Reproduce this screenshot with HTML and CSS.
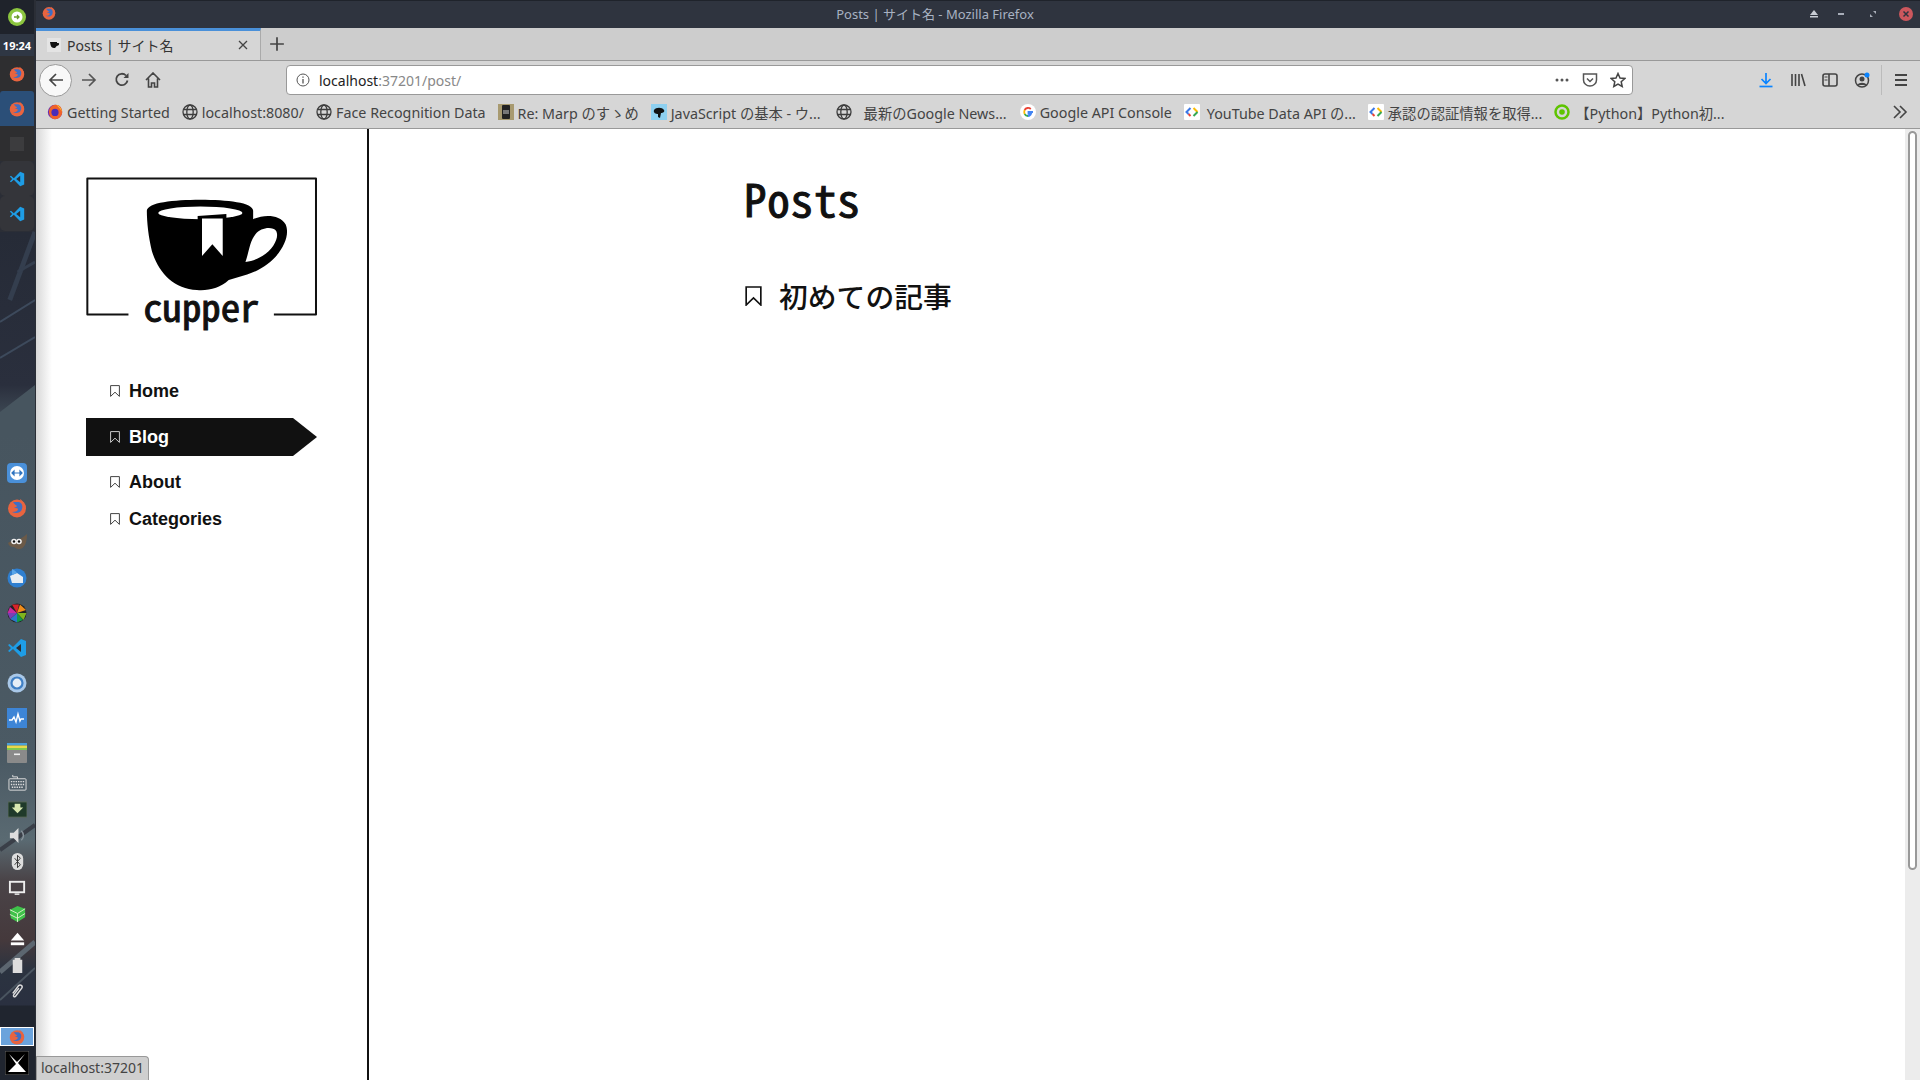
FILE: index.html
```html
<!DOCTYPE html>
<html lang="ja">
<head>
<meta charset="utf-8">
<title>Posts | サイト名 - Mozilla Firefox</title>
<link rel="stylesheet" href="styles.css">
</head>
<body>
<svg class="defs" width="0" height="0">
  <symbol id="ff" viewBox="0 0 20 20">
    <circle cx="10" cy="10.5" r="9" fill="#e8643f"/>
    <path d="M13 1c3 2 6 5 6 9l-4-2z" fill="#e8643f"/>
    <path d="M6 4h6c3 1 4 4 3 7-1 4-6 5-10 3 4 0 6-1 6-3 0-1-2-1-4-1 1-1 3-1 3-2-1-1-3-2-4-4z" fill="#3f6fc4"/>
  </symbol>
  <symbol id="ffc" viewBox="0 0 20 20">
    <circle cx="10" cy="10" r="9" fill="#6a2bb0"/>
    <path d="M3 13C1 7 5 1 11 1c5 0 8 4 8 9 0 5-4 9-9 9-3 0-6-2-7-6z" fill="#f0622a"/>
    <path d="M12 1c4 2 6 5 7 9-1-2-3-4-7-9z" fill="#ffcb2e"/>
    <circle cx="10" cy="10.5" r="4.5" fill="#4a2bb8"/>
  </symbol>
  <symbol id="globe" viewBox="0 0 16 16">
    <g fill="none" stroke="#3d3d3d" stroke-width="1.3">
      <circle cx="8" cy="8" r="7"/><ellipse cx="8" cy="8" rx="3.2" ry="7"/>
      <path d="M1.5 5.5h13M1.5 10.5h13"/>
    </g>
  </symbol>
  <symbol id="gc" viewBox="0 0 16 16">
    <rect width="16" height="16" rx="1" fill="#fff"/>
    <path d="M6.5 4 2.5 8l2 2" fill="none" stroke="#3b78e7" stroke-width="2"/>
    <path d="M4.500 10 6.500 12" fill="none" stroke="#ea4335" stroke-width="2"/>
    <path d="M9.500 4 13.500 8" fill="none" stroke="#fbbc05" stroke-width="2"/>
    <path d="M13.500 8 9.500 12" fill="none" stroke="#34a853" stroke-width="2"/>
  </symbol>
  <symbol id="vsc" viewBox="0 0 20 20">
    <path d="M14 1 6 9 2.500 6 1 7l3 3-3 3 1.500 1L6 11l8 8 5-2V3z" fill="#1e9de6"/>
    <path d="M14 6v8l-5-4z" fill="#2b2e34"/>
  </symbol>
  <symbol id="mark" viewBox="0 0 10 12">
    <path d="M.6.6h8.800v10.800L5 7.200.6 11.400z" fill="none" stroke="currentColor" stroke-width="1"/>
  </symbol>
</svg>

<div class="desktop">
  <aside class="dock">
    <svg class="dock-art" viewBox="0 0 36 1080" preserveAspectRatio="none">
      <path d="M36 232 10 300" stroke="#343e4e" stroke-width="5" fill="none"/>
      <path d="M18 272 36 262" stroke="#343e4e" stroke-width="3" fill="none"/>
      <path d="M0 322 36 300" stroke="#3d4a5c" stroke-width="2" fill="none"/>
      <path d="M0 358 36 337" stroke="#3d4a5c" stroke-width="2" fill="none"/>
      <path d="M0 412 36 385V435H0Z" fill="#47555f"/>
      <path d="M0 850 36 825" stroke="#3a3f48" stroke-width="4" fill="none"/>
      <path d="M0 972 36 942" stroke="#5c6670" stroke-width="5" fill="none"/>
      <path d="M0 1000 36 968" stroke="#4a5560" stroke-width="2" fill="none"/>
    </svg>
    <div class="dock-logo"><svg class="ic20" viewBox="0 0 20 20"><circle cx="10" cy="10" r="9" fill="#8cc63f"/><circle cx="10" cy="10" r="5.500" fill="#fff"/><path d="M7 10h5M10 8l2 2-2 2" stroke="#6a9c2a" stroke-width="1.300" fill="none"/></svg></div>
    <div class="dock-clock">19:24</div>
    <div class="task"><svg class="ic16"><use href="#ff"/></svg></div>
    <div class="task task-on"><svg class="ic16"><use href="#ff"/></svg></div>
    <div class="task"><span class="task-square"></span></div>
    <div class="task task-round"><svg class="ic16"><use href="#vsc"/></svg></div>
    <div class="task task-round"><svg class="ic16"><use href="#vsc"/></svg></div>

    <div class="launchers">
      <div class="launch"><svg class="ic20" viewBox="0 0 20 20"><rect width="20" height="20" rx="4" fill="#4a90d9"/><circle cx="10" cy="10" r="7" fill="#fff"/><path d="M5 10h10M5 10l2-2v4zM15 10l-2-2v4z" stroke="#2f74c0" stroke-width="1.200" fill="#2f74c0"/></svg></div>
      <div class="launch"><svg class="ic20"><use href="#ff"/></svg></div>
      <div class="launch"><svg class="ic20" viewBox="0 0 20 20"><path d="M1 10c3-3 12-2 19-9 0 8-2 15-8 15-3 0-4-2-6-2-2 0-4-1-5-4z" fill="#6b5a48"/><circle cx="7" cy="8.500" r="2.800" fill="#eee"/><circle cx="12" cy="8.500" r="2.800" fill="#eee"/><circle cx="7" cy="8.500" r="1.200" fill="#111"/><circle cx="12" cy="8.500" r="1.200" fill="#111"/></svg></div>
      <div class="launch"><svg class="ic20" viewBox="0 0 20 20"><circle cx="10" cy="10" r="9.500" fill="#2f7fd0"/><path d="M3 8 10 5l6 4v6H5z" fill="#e8edf2"/><path d="M5 1c2 1 4 2 5 4L5 7z" fill="#5aa5e8"/></svg></div>
      <div class="launch"><svg class="ic20" viewBox="0 0 20 20"><circle cx="10" cy="10" r="9.500" fill="#222"/><path d="M10 10 5 1.500h7z" fill="#d8232a"/><path d="M10 10 13 1.500 19 7z" fill="#f08c1a"/><path d="M10 10h9.500l-3 7z" fill="#7fb51e"/><path d="M10 10l6 7-6 2.500z" fill="#12994a"/><path d="M10 10v9.500L3 16z" fill="#2a78c8"/><path d="M10 10 3 16 .5 10z" fill="#7a3fb5"/><path d="M10 10H.5L3 4z" fill="#c82aa0"/></svg></div>
      <div class="launch"><svg class="ic20"><use href="#vsc"/></svg></div>
      <div class="launch"><svg class="ic20" viewBox="0 0 20 20"><circle cx="10" cy="10" r="9.500" fill="#a9c8e8"/><circle cx="10" cy="10" r="5.500" fill="#e6eef6" stroke="#3f7fc4" stroke-width="2.200"/></svg></div>
      <div class="launch"><svg class="ic20" viewBox="0 0 20 20"><rect width="20" height="20" fill="#3d85d6"/><path d="M2 12h3l2-3 2 5 2-8 2 7 1-2h3" fill="none" stroke="#fff" stroke-width="1.400"/></svg></div>
      <div class="launch"><svg class="ic20" viewBox="0 0 20 20"><rect y="0" width="20" height="2.500" fill="#4a9fd8"/><rect y="2.500" width="20" height="2.500" fill="#e8d84a"/><rect y="5" width="20" height="2.500" fill="#7ec850"/><rect y="7" width="20" height="13" rx="1" fill="#8a8a8a"/><rect x="7" y="10.500" width="6" height="1.600" fill="#eee"/></svg></div>
    </div>

    <div class="tray">
      <div class="tray-item"><svg class="ic20" viewBox="0 0 20 20"><rect x="1" y="5" width="18" height="12" rx="1" fill="none" stroke="#ddd"/><path d="M3 8h14M3 11h14M4 14h12" stroke="#ddd" stroke-width="1.500" stroke-dasharray="1.500 1"/><path d="M10 5V3H5V1" stroke="#ddd" fill="none"/></svg></div>
      <div class="tray-item"><svg class="ic20" viewBox="0 0 20 20"><rect width="20" height="16" y="2" fill="#1f3a2a" stroke="#5a6a5a"/><path d="M7 4h6v4h3l-6 6-6-6h3z" fill="#d8e8b0"/></svg></div>
      <div class="tray-item"><svg class="ic20" viewBox="0 0 20 20"><path d="M2 7h4l5-5v16l-5-5H2z" fill="#ddd"/><path d="M14 5c3 3 3 7 0 10" stroke="#8a949c" stroke-width="1.500" fill="none"/></svg></div>
      <div class="tray-item"><svg class="ic20" viewBox="0 0 20 20"><rect x="4" y="1" width="12" height="18" rx="6" fill="#ddd"/><path d="M7 6.500l6 7-3 3v-13l3 3-6 7" fill="none" stroke="#333"/></svg></div>
      <div class="tray-item"><svg class="ic20" viewBox="0 0 20 20"><rect x="2" y="4" width="15" height="11" fill="none" stroke="#eee" stroke-width="2"/><path d="M7 17h5" stroke="#eee" stroke-width="1.500"/></svg></div>
      <div class="tray-item"><svg class="ic20" viewBox="0 0 20 20"><path d="M2 6l8-4 8 3v9l-8 5-7-4z" fill="#3fc24a"/><path d="M2 6l8 4 8-5M10 10v9M2 11l8 4 8-5" stroke="#d8f0c8" fill="none"/></svg></div>
      <div class="tray-item"><svg class="ic20" viewBox="0 0 20 20"><path d="M10 3l7 8H3z" fill="#fff"/><rect x="3" y="13" width="14" height="3" fill="#fff"/></svg></div>
      <div class="tray-item"><svg class="ic20" viewBox="0 0 20 20"><path d="M7 2h6v2h2v14H5V4h2z" fill="#ddd"/></svg></div>
      <div class="tray-item"><svg class="ic20" viewBox="0 0 20 20"><path d="M5 12l6-8c2-2 5 0 3.500 2.500L8 15c-1 1.500-3 0-2-1.500l5.500-7" fill="none" stroke="#ddd" stroke-width="1.500"/></svg></div>
    </div>

    <div class="dock-bottom">
      <div class="win-active"><svg class="ic16"><use href="#ff"/></svg></div>
      <div class="x-box"><svg class="ic24" viewBox="0 0 24 24"><rect width="24" height="24" fill="#000" stroke="#666"/><path d="M4 3l8 8 8-8-7 9 8 9H3l8-8z" fill="#fff"/></svg></div>
    </div>
  </aside>

  <div class="window">
    <header class="titlebar">
      <svg class="ic14 title-ff"><use href="#ff"/></svg>
      <div class="title-text">Posts | サイト名 - Mozilla Firefox</div>
      <div class="win-btns">
        <svg class="ic12 win-first" viewBox="0 0 12 12"><path d="M6 2l4 5H2z" fill="#c8ccd4"/><rect x="2" y="8" width="8" height="1.500" fill="#c8ccd4"/></svg>
        <svg class="ic12" viewBox="0 0 12 12"><rect x="3" y="5" width="6" height="2" fill="#a8adb8"/></svg>
        <svg class="ic12" viewBox="0 0 12 12"><path d="M6 3h3v3zM6 9H3V6z" fill="#a8adb8"/></svg>
        <svg class="ic14" viewBox="0 0 14 14"><circle cx="7" cy="7" r="7" fill="#cc575d"/><path d="M4.500 4.500l5 5m0-5l-5 5" stroke="#2f343f" stroke-width="1.500"/></svg>
      </div>
    </header>

    <div class="tabbar">
      <div class="tab">
        <svg class="ic14" viewBox="0 0 14 14"><rect width="14" height="14" fill="#e4e4e4"/><path d="M3 4h7v1h1.500c1 0 1 3-2 3-.5 1.500-1.500 2-2.500 2-3 0-3.500-3-4-6z" fill="#111"/></svg>
        <span class="tab-label">Posts | サイト名</span>
        <svg class="ic12 tab-close" viewBox="0 0 12 12"><path d="M2 2l8 8m0-8l-8 8" stroke="#444" stroke-width="1.300"/></svg>
      </div>
      <svg class="newtab" viewBox="0 0 14 14"><path d="M7 1v12M1 7h12" stroke="#444" stroke-width="1.500"/></svg>
    </div>

    <div class="navbar">
      <div class="back"><svg class="ic18" viewBox="0 0 18 18"><path d="M16 9H3M9 3 3 9l6 6" fill="none" stroke="#444" stroke-width="1.700"/></svg></div>
      <svg class="ic18 fwd" viewBox="0 0 18 18"><path d="M2 9h13M9 3l6 6-6 6" fill="none" stroke="#555" stroke-width="1.700"/></svg>
      <svg class="ic16 reload" viewBox="0 0 16 16"><path d="M13.500 8.500A5.700 5.700 0 1 1 12 3.500" fill="none" stroke="#444" stroke-width="1.800"/><path d="M14.500 1v5h-5z" fill="#444"/></svg>
      <svg class="ic16 home" viewBox="0 0 16 16"><path d="M1 8l7-7 7 7M3.500 6.500V15h3v-4h3v4h3V6.500" fill="none" stroke="#444" stroke-width="1.600"/></svg>
      <div class="urlbar">
        <svg class="ic14" viewBox="0 0 14 14"><circle cx="7" cy="7" r="6" fill="none" stroke="#555"/><path d="M7 6v4.500M7 3.500v1.300" stroke="#555" stroke-width="1.300"/></svg>
        <span class="url"><span class="url-host">localhost</span>:37201/post/</span>
        <span class="url-fill"></span>
        <svg class="ic16" viewBox="0 0 16 16"><circle cx="3" cy="8" r="1.500" fill="#555"/><circle cx="8" cy="8" r="1.500" fill="#555"/><circle cx="13" cy="8" r="1.500" fill="#555"/></svg>
        <svg class="ic16" viewBox="0 0 16 16"><path d="M1.500 2h13v6c0 3.500-3 6-6.500 6s-6.500-2.500-6.500-6z" fill="none" stroke="#555" stroke-width="1.500"/><path d="M5 6.500l3 3 3-3" fill="none" stroke="#555" stroke-width="1.500"/></svg>
        <svg class="ic16" viewBox="0 0 16 16"><path d="M8 1.500l2 4.500 4.800.5-3.600 3.200 1 4.800L8 12l-4.200 2.500 1-4.800L1.200 6.500 6 6z" fill="none" stroke="#444" stroke-width="1.500"/></svg>
      </div>
      <div class="tools">
        <svg class="ic16" viewBox="0 0 16 16"><path d="M8 1v10M3.500 7 8 11.500 12.500 7" fill="none" stroke="#0a84ff" stroke-width="1.700"/><path d="M1.500 14.500h13" stroke="#0a84ff" stroke-width="1.700"/></svg>
        <svg class="ic16" viewBox="0 0 16 16"><path d="M2 2v12M5.500 2v12M9 2v12M11.500 2l3.500 12" stroke="#444" stroke-width="1.600"/></svg>
        <svg class="ic16" viewBox="0 0 16 16"><rect x="1" y="2" width="14" height="12" rx="2" fill="none" stroke="#444" stroke-width="1.600"/><path d="M7 2v12" stroke="#444" stroke-width="1.600"/><path d="M2.500 5h3M2.500 8h3" stroke="#444"/></svg>
        <svg class="ic16" viewBox="0 0 16 16"><circle cx="8" cy="8.500" r="6.500" fill="none" stroke="#444" stroke-width="1.500"/><circle cx="8" cy="7" r="2.500" fill="#444"/><path d="M3.500 13c1-3 8-3 9 0" fill="#444"/><circle cx="13" cy="3" r="2.500" fill="#0a84ff"/></svg>
        <span class="tools-sep"></span>
        <svg class="ic16" viewBox="0 0 16 16"><path d="M2 3h12M2 8h12M2 13h12" stroke="#444" stroke-width="1.800"/></svg>
      </div>
    </div>

    <nav class="bookmarks">
      <a class="bm"><svg class="ic16"><use href="#ffc"/></svg>Getting Started</a>
      <a class="bm"><svg class="ic16"><use href="#globe"/></svg>localhost:8080/</a>
      <a class="bm"><svg class="ic16"><use href="#globe"/></svg>Face Recognition Data</a>
      <a class="bm"><svg class="ic16" viewBox="0 0 16 16"><rect width="16" height="16" fill="#a89a70"/><rect x="4" y="1" width="8" height="14" rx="1" fill="#222"/><rect x="5" y="6" width="6" height="4" fill="#777"/></svg>Re: Marp のすゝめ</a>
      <a class="bm bm-js"><svg class="ic16" viewBox="0 0 16 16"><rect width="16" height="16" fill="#8ed0f0"/><path d="M3 6c2-3 8-3 10 0 1 2-1 3-3 3l-1 5-2-1v-3C5 10 2 9 3 6z" fill="#111"/></svg>JavaScript の基本 - ウ...</a>
      <a class="bm bm-news"><svg class="ic16"><use href="#globe"/></svg>最新のGoogle News...</a>
      <a class="bm"><svg class="ic16" viewBox="0 0 16 16"><circle cx="8" cy="8" r="8" fill="#fff"/><path d="M13 8H8.500v1.800H11c-.5 1.500-1.500 2.200-3 2.200" fill="none" stroke="#4285f4" stroke-width="1.800"/><path d="M8 12c-1.500 0-2.700-.8-3.400-2" fill="none" stroke="#34a853" stroke-width="1.800"/><path d="M4.600 10C4.200 9 4.200 7 4.600 6" fill="none" stroke="#fbbc05" stroke-width="1.800"/><path d="M4.600 6C5.800 3.600 9 3.400 10.800 5" fill="none" stroke="#ea4335" stroke-width="1.800"/></svg>Google API Console</a>
      <a class="bm bm-yt"><svg class="ic16"><use href="#gc"/></svg>YouTube Data API の...</a>
      <a class="bm"><svg class="ic16"><use href="#gc"/></svg>承認の認証情報を取得...</a>
      <a class="bm bm-py"><svg class="ic16" viewBox="0 0 16 16"><circle cx="8" cy="8" r="6.500" fill="none" stroke="#5ec400" stroke-width="2.500"/><circle cx="8" cy="8" r="2.800" fill="#5ec400"/></svg>【Python】Python初...</a>
      <span class="bm-fill"></span>
      <svg class="ic16 bm-more" viewBox="0 0 16 16"><path d="M2 2l6 6-6 6M8 2l6 6-6 6" fill="none" stroke="#444" stroke-width="1.600"/></svg>
    </nav>

    <div class="page">
      <div class="shadow"></div>
      <aside class="sidebar">
        <svg class="logo" viewBox="78 48 694 475" aria-label="cupper">
          <path d="M205 465H82V58H766V465H640" fill="none" stroke="#111" stroke-width="6" stroke-linejoin="round"/>
          <path d="M260 155C262 130 340 122 420 122S578 130 578 155V180C610 165 657 165 675 195 695 240 645 320 560 345L505 362C480 385 445 395 410 392 340 388 295 340 275 275 265 235 260 190 260 155Z" fill="#000"/>
          <ellipse cx="420" cy="161" rx="126" ry="19" fill="#fff"/>
          <path d="M555 308C565 280 568 245 585 225 600 205 635 200 647 215 660 240 625 298 555 308Z" fill="#fff"/>
          <path d="M412 170 498 164V190H412Z" fill="#000"/>
          <path d="M425 178H487V290L456 255 425 290Z" fill="#fff"/>
          <text class="logo-text" x="423" y="488" text-anchor="middle">cupper</text>
        </svg>
        <ul class="menu">
          <li class="menu-item"><svg class="mark"><use href="#mark"/></svg>Home</li>
          <li class="menu-item menu-active"><svg class="mark"><use href="#mark"/></svg>Blog</li>
          <li class="menu-item"><svg class="mark"><use href="#mark"/></svg>About</li>
          <li class="menu-item"><svg class="mark"><use href="#mark"/></svg>Categories</li>
        </ul>
      </aside>
      <main class="content">
        <h1 class="heading">Posts</h1>
        <h2 class="post"><svg class="post-mark"><use href="#mark"/></svg>初めての記事</h2>
      </main>
      <div class="scrollbar"><div class="thumb"></div></div>
    </div>
  </div>

  <div class="tooltip">localhost:37201</div>
</div>
</body>
</html>
```
FILE: styles.css
```css
* { box-sizing: border-box; }
html, body { margin: 0; padding: 0; height: 100%; overflow: hidden; }
body { font-family: "Noto Sans", "Noto Sans CJK JP", sans-serif; background: #fff; }
.defs { position: absolute; }
.desktop { display: flex; width: 1920px; height: 1080px; position: relative; }
svg { display: block; flex: none; }
.ic12 { width: 12px; height: 12px; }
.ic14 { width: 14px; height: 14px; }
.ic16 { width: 16px; height: 16px; }
.ic18 { width: 18px; height: 18px; }
.ic20 { width: 20px; height: 20px; }
.ic24 { width: 24px; height: 24px; }

/* Dock */
.dock {
  width: 36px; height: 1080px; flex: none; display: flex; flex-direction: column; position: relative; padding-right: 1px;
  background: linear-gradient(180deg, #2b2e36 0, #2b2e36 232px, #262b37 232px, #2a2f3d 385px, #47555f 430px, #4b5a64 760px, #5a6a72 840px, #4a4448 880px, #45393c 940px, #2b3340 970px, #2a3040 1005px, #20252f 1006px, #20252f 1080px);
  border-right: 1px solid #2a2e36;
}
.dock-art { position: absolute; left: 0; top: 0; width: 35px; height: 1080px; }
.dock > div { position: relative; }
.dock-logo { height: 34px; display: flex; align-items: center; justify-content: center; background: #1f232b; }
.dock-clock { height: 22px; display: flex; align-items: center; justify-content: center; background: #2f3744; color: #fff; font-size: 11px; font-weight: 700; }
.task { height: 35px; display: flex; align-items: center; justify-content: center; background: #2e2e30; }
.task-on { background: #2b4f78; border-radius: 3px 3px 0 0; }
.task-round { background: #34353a; border-radius: 5px; }
.task-square { width: 14px; height: 14px; background: #3c3c3e; }
.launchers { margin-top: 224px; }
.launch { height: 35px; display: flex; align-items: center; justify-content: center; }
.tray-item { height: 26px; display: flex; align-items: center; justify-content: center; }
.tray-item .ic20 { width: 19px; height: 19px; }
.dock-bottom { margin-top: 2px; padding-top: 21px; display: flex; flex-direction: column; align-items: center; }
.win-active { width: 34px; height: 19px; background: #6ba3dc; border: 1px solid #fff; display: flex; align-items: center; justify-content: center; }
.x-box { margin-top: 5px; }

/* Window chrome */
.window { flex: 1; min-width: 0; display: flex; flex-direction: column; height: 1080px; }
.titlebar { height: 28px; flex: none; display: flex; align-items: center; justify-content: center; position: relative; padding: 0 86px 2px 0; background: #2f343f; border-top: 1px solid #1f232b; }
.title-ff { position: absolute; left: 6px; top: 5px; }
.title-text { color: #a8b2c2; font-size: 13px; }
.win-btns { position: absolute; right: 7px; top: 6px; display: flex; align-items: center; gap: 20px; }
.win-first { margin-right: -5px; }
.tabbar { height: 33px; flex: none; display: flex; align-items: center; background: #cdcdcd; border-bottom: 1px solid #999; }
.tab { width: 225px; height: 32px; display: flex; align-items: center; padding: 0 11px 2px 11px; gap: 6px; background: #d6d6d6; border-top: 3px solid #4a90d9; border-right: 1px solid #aaa; }
.tab-label { flex: 1; font-size: 14px; color: #333; white-space: nowrap; }
.newtab { width: 16px; height: 16px; margin-left: 8px; }
.navbar { height: 35px; flex: none; display: flex; align-items: center; background: #d6d6d6; position: relative; padding: 3px 0 0 3px; }
.back { width: 33px; height: 33px; border-radius: 50%; background: #f8f8f8; border: 1px solid #999; display: flex; align-items: center; justify-content: center; flex: none; }
.fwd { margin-left: 8px; }
.reload { margin-left: 16px; }
.home { margin-left: 15px; }
.urlbar { width: 1347px; height: 30px; flex: none; margin-left: 125px; display: flex; align-items: center; gap: 12px; padding: 0 6px 0 9px; background: #fff; border: 1px solid #999; border-radius: 4px; }
.url { font-size: 14px; color: #888; margin-left: -3px; }
.url-host { color: #222; }
.url-fill { flex: 1; }
.tools { display: flex; align-items: center; gap: 16px; margin-left: 125px; }
.tools-sep { width: 1px; height: 30px; background: #bbb; margin: 0 -5px; }
.bookmarks { height: 33px; flex: none; display: flex; align-items: center; gap: 12px; padding: 0 12px 0 11px; background: #d6d6d6; border-bottom: 1px solid #999; overflow: hidden; }
.bm { display: flex; align-items: center; gap: 4px; font-size: 14.3px; color: #444; white-space: nowrap; }
.bm-js { margin-right: 3px; }
.bm-news { gap: 12px; margin-right: 1px; }
.bm-yt { gap: 7px; }
.bm-py { gap: 5px; }
.bm-fill { flex: 1; }

/* Page */
.page { flex: 1; min-height: 0; display: flex; background: #fff; position: relative; }
.shadow { position: absolute; left: 0; top: 0; bottom: 0; width: 16px; background: linear-gradient(90deg, #d8d8d8, #fff); }
.sidebar { width: 333px; flex: none; padding: 46px 0 0 50px; border-right: 2px solid #111; position: relative; }
.logo { width: 232px; height: 159px; }
.logo-text { font-family: "Noto Sans Mono CJK JP", "DejaVu Sans Mono", monospace; font-size: 116px; font-weight: 400; fill: #111; stroke: #111; stroke-width: 3px; }
.menu { list-style: none; margin: 39px 0 0; padding: 0; display: flex; flex-direction: column; gap: 1px; width: 231px; }
.menu-item { height: 36px; display: flex; align-items: center; padding-left: 24px; gap: 9px; font-family: "Liberation Sans", sans-serif; font-size: 18px; font-weight: 700; color: #111; }
.menu-active { height: 38px; margin: 8px 0 7px; color: #fff; background: #111; clip-path: polygon(0 0, 207px 0, 100% 50%, 207px 100%, 0 100%); }
.mark { width: 10px; height: 12px; color: #444; }
.menu-active .mark { color: #ccc; }
.content { flex: 1; padding: 36px 0 0 375px; color: #111; }
.heading { margin: 0; font-family: "Noto Sans Mono CJK JP", "DejaVu Sans Mono", monospace; font-size: 45px; letter-spacing: .8px; line-height: 66px; font-weight: 400; -webkit-text-stroke: 1px #111; }
.post { margin: 45px 0 0; display: flex; align-items: center; gap: 17px; font-family: "Noto Sans CJK JP", sans-serif; font-size: 28.8px; line-height: 40px; font-weight: 500; }
.post-mark { width: 17px; height: 20px; color: #111; margin-left: 1px; }
.scrollbar { width: 15px; flex: none; background: #ececec; padding: 2px 3px 0; position: relative; }
.thumb { height: 739px; background: #fff; border: 2px solid #999; border-radius: 5px; }
.tooltip { position: absolute; left: 36px; top: 1056px; width: 113px; height: 24px; padding-left: 4px; background: #cfcfcf; border: 1px solid #999; border-bottom: 0; border-radius: 0 4px 0 0; color: #444; font-size: 14px; line-height: 22px; }
```
